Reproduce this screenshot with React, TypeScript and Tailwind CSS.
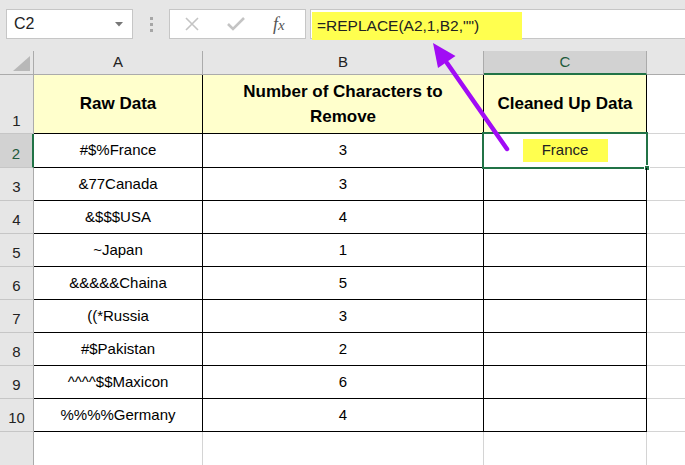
import React from "react";

const rows: [string, string][] = [
  ["#$%France", "3"],
  ["&77Canada", "3"],
  ["&$$$USA", "4"],
  ["~Japan", "1"],
  ["&&&&&Chaina", "5"],
  ["((*Russia", "3"],
  ["#$Pakistan", "2"],
  ["^^^^$$Maxicon", "6"],
  ["%%%%Germany", "4"],
];

export default function App() {
  return (
    <div className="relative w-[685px] h-[465px] overflow-hidden bg-[#e6e6e6] font-['Liberation_Sans',Arial,sans-serif] text-[#000]">
      {/* toolbar */}
      <div className="h-[51px] flex items-start pt-[9px]">
        <div className="ml-[6px] w-[127px] h-[30px] bg-white border border-[#c6c6c6] flex items-center justify-between pl-[7px] pr-[9px]">
          <span className="text-[16px] text-[#222]">C2</span>
          <svg width="8" height="5" viewBox="0 0 8 5">
            <polygon points="0,0 8,0 4,4.5" fill="#777" />
          </svg>
        </div>
        <div className="ml-[17px] w-[3px] h-[30px] flex flex-col items-center justify-center gap-[3px]">
          <div className="w-[3px] h-[3px] bg-[#a6a6a6]" />
          <div className="w-[3px] h-[3px] bg-[#a6a6a6]" />
          <div className="w-[3px] h-[3px] bg-[#a6a6a6]" />
        </div>
        <div className="ml-[16px] w-[137px] h-[30px] bg-white border border-[#c6c6c6] flex items-center">
          <svg width="16" height="16" viewBox="0 0 16 16" className="ml-[14px]">
            <path d="M2 2 L14 14 M14 2 L2 14" stroke="#c4c4c4" strokeWidth="1.6" />
          </svg>
          <svg width="20" height="16" viewBox="0 0 20 16" className="ml-[26px]">
            <path d="M2 8 L7 13 L18 2" stroke="#c4c4c4" strokeWidth="2.6" fill="none" />
          </svg>
          <span className="ml-[27px] text-[18px] italic font-['Liberation_Serif',serif] text-[#555] leading-none">
            f<span className="text-[15px]">x</span>
          </span>
        </div>
        <div className="ml-[4px] flex-1 h-[30px] bg-white border-y border-l border-[#c6c6c6] relative">
          <div className="absolute left-[1px] top-[2px] w-[210px] h-[28px] bg-[#ffff4f] flex items-center pl-[5px]">
            <span className="text-[15.5px] text-[#222] whitespace-nowrap">=REPLACE(A2,1,B2,"")</span>
          </div>
        </div>
      </div>

      {/* sheet */}
      <div className="grid grid-cols-[34px_169px_281px_163px_1fr] grid-rows-[24px_59px_34px_repeat(8,33px)_1fr] h-[414px] bg-white">
        {/* header row */}
        <div className="bg-[#e6e6e6] border-r border-b border-[#ababab] relative">
          <svg width="17" height="15" viewBox="0 0 17 15" className="absolute right-[3px] bottom-[3px]">
            <polygon points="17,0 17,15 0,15" fill="#b8b8b8" />
          </svg>
        </div>
        <div className="bg-[#e6e6e6] border-r border-b border-[#ababab] flex items-center justify-center text-[15px] text-[#222]">A</div>
        <div className="bg-[#e6e6e6] border-r border-b border-[#ababab] flex items-center justify-center text-[15px] text-[#222]">B</div>
        <div className="bg-[#d2d2d2] border-r border-[#ababab] border-b-2 border-b-[#217346] flex items-center justify-center text-[15px] text-[#1e5a3c]">C</div>
        <div className="bg-[#e6e6e6] border-b border-[#ababab]" />

        {/* row 1 */}
        <div className="bg-[#e6e6e6] border-r border-[#ababab] border-b border-b-[#c6c6c6] flex items-end justify-center pb-[1px] text-[15px] text-[#222]">1</div>
        <div className="bg-[#ffffcc] border-r border-b border-black flex items-center justify-center font-bold text-[17px]">Raw Data</div>
        <div className="bg-[#ffffcc] border-r border-b border-black flex items-center justify-center font-bold text-[17px] text-center leading-[25px]">
          Number of Characters to<br />Remove
        </div>
        <div className="bg-[#ffffcc] border-r border-b border-black flex items-center justify-center font-bold text-[17px]">Cleaned Up Data</div>
        <div className="border-b border-[#d4d4d4]" />

        {rows.map(([a, b], i) => {
          const n = i + 2;
          const sel = n === 2;
          return (
            <React.Fragment key={n}>
              <div
                className={
                  sel
                    ? "bg-[#d2d2d2] border-r-2 border-r-[#217346] border-b border-b-[#c6c6c6] flex items-end justify-center pb-[2px] text-[15px] text-[#1e5a3c]"
                    : "bg-[#e6e6e6] border-r border-r-[#ababab] border-b border-b-[#c6c6c6] flex items-end justify-center pb-[2px] text-[15px] text-[#222]"
                }
              >
                {n}
              </div>
              <div className="border-r border-b border-black flex items-center justify-center text-[15px]">{a}</div>
              <div className="border-r border-b border-black flex items-center justify-center text-[15px]">{b}</div>
              <div className="border-r border-b border-black relative flex items-center justify-center">
                {sel && (
                  <>
                    <div className="w-[85px] h-[23px] bg-[#ffff4f] flex items-center justify-center text-[15px] text-[#222]">France</div>
                    <div className="absolute left-[-2px] top-[-2px] right-[-2px] bottom-[-2px] border-2 border-[#217346]" />
                    <div className="absolute right-[-4px] bottom-[-4px] w-[6px] h-[6px] bg-[#217346] border border-white" />
                  </>
                )}
              </div>
              <div className="border-b border-[#d4d4d4]" />
            </React.Fragment>
          );
        })}

        {/* row 11 partial */}
        <div className="bg-[#e6e6e6] border-r border-[#ababab]" />
        <div className="border-r border-[#d4d4d4]" />
        <div className="border-r border-[#d4d4d4]" />
        <div className="border-r border-[#d4d4d4]" />
        <div />
      </div>

      {/* purple arrow */}
      <svg className="absolute left-0 top-0 pointer-events-none" width="685" height="465" viewBox="0 0 685 465">
        <line x1="507" y1="149" x2="447" y2="63" stroke="#a10cf5" strokeWidth="4.5" strokeLinecap="round" />
        <polygon points="433,43 455.5,56 438,68" fill="#a10cf5" />
      </svg>
    </div>
  );
}
